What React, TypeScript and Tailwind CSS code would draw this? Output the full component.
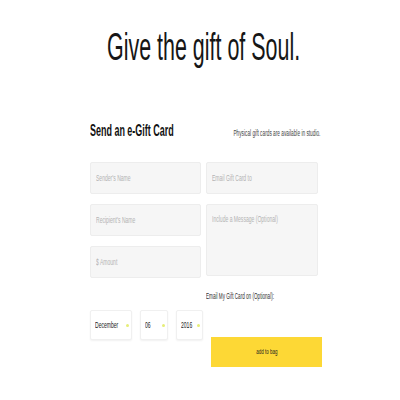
import type { ReactNode } from "react";

const font = { fontFamily: '"Liberation Sans", Arial, sans-serif' };

// the whole screenshot is squeezed horizontally, so text is narrowed with scale-x
function Narrow({ children, className = "" }: { children: ReactNode; className?: string }) {
  return <span className={`inline-block whitespace-nowrap origin-left scale-x-[0.56] ${className}`}>{children}</span>;
}

function Field({ label, className = "" }: { label: string; className?: string }) {
  return (
    <div className={`bg-[#f6f6f6] border border-[#ededed] rounded-[2px] flex items-center px-[5px] ${className}`}>
      <Narrow className="text-[9px] leading-[9px] text-[#b3b3b3]">{label}</Narrow>
    </div>
  );
}

function DateSelect({ value, w, dotGap }: { value: string; w: string; dotGap: string }) {
  return (
    <div className={`${w} h-[30px] bg-white border border-[#f0f0f0] rounded-[2px] shadow-[0_1px_2px_rgba(0,0,0,0.06)] flex items-center pl-[4px]`}>
      <div className={`${dotGap} shrink-0`}>
        <Narrow className="text-[9px] leading-[9px] text-[#222]">{value}</Narrow>
      </div>
      <span className="w-[3px] h-[3px] rounded-full bg-[#e6ee78]" />
    </div>
  );
}

export default function App() {
  return (
    <div className="w-[400px] h-[400px] bg-white overflow-hidden text-[9px] leading-none" style={font}>
      <div className="pt-[27px] pl-[7px] h-[66px] text-center">
        <span className="inline-block whitespace-nowrap origin-center scale-x-[0.55] text-[39px] leading-[39px] text-[#161616]">
          Give the gift of Soul.
        </span>
      </div>

      <div className="mt-[57px] ml-[90px] w-[230px] flex items-baseline">
        <div className="w-0 flex-1">
          <Narrow className="text-[16px] leading-[16px] font-bold text-[#111]">Send an e-Gift Card</Narrow>
        </div>
        <div className="w-0 flex-1 flex justify-end">
          <span className="shrink-0 inline-block whitespace-nowrap origin-right scale-x-[0.56] text-[8.5px] leading-[9px] text-[#444]">
            Physical gift cards are available in studio.
          </span>
        </div>
      </div>

      <div className="mt-[23px] ml-[90px] flex gap-[5px]">
        <div className="w-[111px] flex flex-col gap-[10px]">
          <Field label="Sender's Name" className="h-[32px]" />
          <Field label="Recipient's Name" className="h-[32px]" />
          <Field label="$ Amount" className="h-[32px]" />
        </div>
        <div className="w-[112px] flex flex-col gap-[10px]">
          <Field label="Email Gift Card to" className="h-[32px]" />
          <div className="h-[72px] bg-[#f6f6f6] border border-[#ededed] rounded-[2px] px-[5px] pt-[10px]">
            <Narrow className="text-[9px] leading-[9px] text-[#b3b3b3]">Include a Message (Optional)</Narrow>
          </div>
        </div>
      </div>

      <div className="mt-[14px] ml-[206px] h-[9px]">
        <Narrow className="text-[8.25px] leading-[9px] text-[#333]">Email My Gift Card on (Optional):</Narrow>
      </div>

      <div className="mt-[9px] ml-[90px] flex items-start">
        <div className="flex gap-[8px]">
          <DateSelect value="December" w="w-[42px]" dotGap="w-[31px]" />
          <DateSelect value="06" w="w-[28px]" dotGap="w-[17px]" />
          <DateSelect value="2016" w="w-[27px]" dotGap="w-[16px]" />
        </div>
        <button className="ml-[8px] mt-[27px] w-[111px] h-[30px] bg-[#fdd835] flex items-center justify-center">
          <span className="inline-block whitespace-nowrap origin-center scale-x-[0.56] text-[8px] leading-[8px] text-[#222]">
            add to bag
          </span>
        </button>
      </div>
    </div>
  );
}
